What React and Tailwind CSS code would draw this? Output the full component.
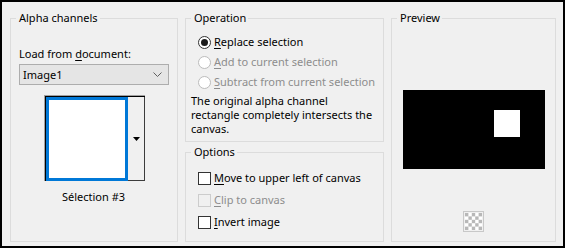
import React from "react";

const font = { fontFamily: '"Noto Sans", "Open Sans", sans-serif' };

function Legend({ children }) {
  return (
    <legend className="ml-[5px] pl-[3px] pr-[2px] text-[11px] leading-[16px] text-black">
      {children}
    </legend>
  );
}

function Radio({ checked, disabled, children }) {
  return (
    <div className="flex h-[20px] items-center pl-[12px]">
      <div
        className={
          "flex h-[13px] w-[13px] items-center justify-center rounded-full border bg-white " +
          (disabled ? "border-[#bcbcbc] bg-[#f0f0f0]" : "border-[#333333]")
        }
      >
        {checked && <div className="h-[7px] w-[7px] rounded-full bg-[#1a1a1a]" />}
      </div>
      <span
        className={
          "ml-[3px] text-[11px] leading-[16px] " + (disabled ? "text-[#8d8d8d]" : "text-black")
        }
      >
        {children}
      </span>
    </div>
  );
}

function Check({ disabled, children }) {
  return (
    <div className="flex h-[22px] items-center pl-[12px]">
      <div
        className={
          "h-[13px] w-[13px] border " +
          (disabled ? "border-[#cccccc] bg-[#f0f0f0]" : "border-[#333333] bg-white")
        }
      />
      <span
        className={
          "ml-[3px] text-[11px] leading-[16px] " + (disabled ? "text-[#8d8d8d]" : "text-black")
        }
      >
        {children}
      </span>
    </div>
  );
}

function Checker() {
  const cells = [];
  for (let r = 0; r < 5; r++) {
    for (let c = 0; c < 5; c++) {
      if ((r + c) % 2 === 0) {
        cells.push(<rect key={r + "-" + c} x={2 + c * 3.4} y={2 + r * 3.4} width="3.4" height="3.4" fill="#b8b8b8" />);
      }
    }
  }
  return (
    <svg width="21" height="21" viewBox="0 0 21 21">
      <rect x="0.5" y="0.5" width="20" height="20" fill="#f0f0f0" stroke="#c8c8c8" />
      <rect x="2" y="2" width="17" height="17" fill="#ffffff" />
      {cells}
    </svg>
  );
}

export default function App() {
  return (
    <div
      style={font}
      className="box-border flex h-[248px] w-[565px] gap-[7px] border-2 border-black bg-[#f0f0f0] pl-[8px] pt-[8px] text-[11px] text-black"
    >
      {/* Alpha channels */}
      <fieldset className="m-0 box-border h-[232px] w-[168px] border border-[#dcdcdc] p-0">
        <Legend>Alpha channels</Legend>
        <div className="pl-[8px] pt-[20px]">
          <div className="leading-[16px]">
            Load from <u className="underline-offset-2">d</u>ocument:
          </div>
          <div className="mt-[2px] box-border flex h-[21px] w-[150px] items-center justify-between border border-[#adadad] bg-[#e5e5e5] pl-[3px] pr-[6px]">
            <span className="leading-[16px]">Image1</span>
            <svg width="9" height="5" viewBox="0 0 9 5">
              <path d="M0.5 0.5 L4.5 4.5 L8.5 0.5" fill="none" stroke="#606060" strokeWidth="1" />
            </svg>
          </div>
          <div className="ml-[25px] mt-[10px] box-border h-[86px] w-[101px] border-l border-t border-[#a0a0a0]">
            <div className="box-border flex h-full w-full border-l border-t border-black">
              <div className="box-border h-full w-[82px] border-[3px] border-[#0078d7] bg-white" />
              <div className="box-border flex h-full flex-1 items-center justify-center border-b border-r border-[#3c3c3c] bg-[#f0f0f0]">
                <svg width="7" height="4" viewBox="0 0 7 4" className="mt-[1px]">
                  <polygon points="0,0 7,0 3.5,4" fill="#000" />
                </svg>
              </div>
            </div>
          </div>
          <div className="ml-[24px] mt-[8px] w-[101px] text-center leading-[16px]">Sélection #3</div>
        </div>
      </fieldset>

      {/* Middle column */}
      <div className="flex w-[199px] flex-col gap-[2px]">
        <fieldset className="m-0 box-border h-[132px] w-[199px] border border-[#dcdcdc] p-0">
          <Legend>Operation</Legend>
          <div className="pt-[6px]">
            <Radio checked>
              <u className="underline-offset-2">R</u>eplace selection
            </Radio>
            <Radio disabled>
              <u className="underline-offset-2">A</u>dd to current selection
            </Radio>
            <Radio disabled>
              <u className="underline-offset-2">S</u>ubtract from current selection
            </Radio>
            <div className="mt-[2px] pl-[5px] leading-[14px]">
              <div>The original alpha channel</div>
              <div>rectangle completely intersects the</div>
              <div>canvas.</div>
            </div>
          </div>
        </fieldset>
        <fieldset className="m-0 box-border h-[98px] w-[199px] border border-[#dcdcdc] p-0">
          <Legend>Options</Legend>
          <div className="pt-[7px]">
            <Check>
              <u className="underline-offset-2">M</u>ove to upper left of canvas
            </Check>
            <Check disabled>
              <u className="underline-offset-2">C</u>lip to canvas
            </Check>
            <Check>
              <u className="underline-offset-2">I</u>nvert image
            </Check>
          </div>
        </fieldset>
      </div>

      {/* Preview */}
      <fieldset className="m-0 box-border h-[232px] w-[165px] border border-[#dcdcdc] p-0">
        <Legend>Preview</Legend>
        <div className="pt-[64px]">
          <div className="ml-[11px] h-[79px] w-[142px] bg-black pl-[91px] pt-[20px]">
            <div className="h-[27px] w-[26px] bg-white" />
          </div>
          <div className="ml-[71px] mt-[42px] h-[21px] w-[21px]">
            <Checker />
          </div>
        </div>
      </fieldset>
    </div>
  );
}
